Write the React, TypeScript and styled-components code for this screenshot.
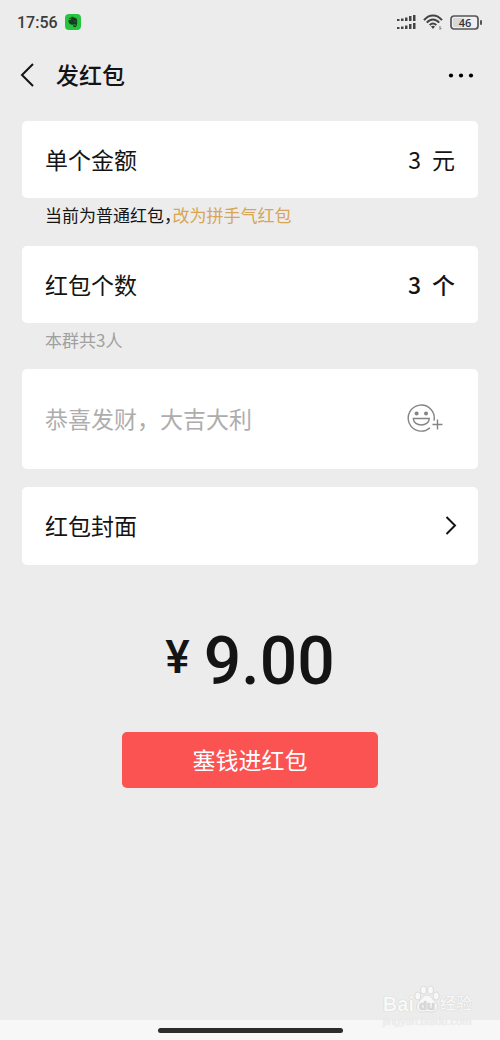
import React, { useState } from "react";
import styled, { createGlobalStyle } from "styled-components";

const GlobalStyle = createGlobalStyle`
  * { box-sizing: border-box; }
  body {
    margin: 0;
    background: #ececec;
    color: #141414;
    font-family: "Noto Sans CJK SC", sans-serif;
  }
  button, input { font: inherit; color: inherit; }
  svg { display: block; flex: none; }
`;

const Screen = styled.div`
  position: relative;
  display: flex;
  flex-direction: column;
  min-height: 100vh;
`;

const StatusBar = styled.div`
  display: flex;
  align-items: center;
  justify-content: space-between;
  height: 44px;
  padding: 0 18px 0 17px;
`;

const StatusGroup = styled.div`
  display: flex;
  align-items: center;
  gap: 7px;
`;

const Clock = styled.time`
  padding-top: 2px;
  font: 500 16px/20px Roboto, sans-serif;
  color: #3c3c3c;
`;

const NavBar = styled.header`
  display: flex;
  align-items: center;
  height: 62px;
  padding: 0 21px 0 14px;
`;

const IconButton = styled.button`
  display: flex;
  align-items: center;
  justify-content: center;
  padding: 5px;
  border: 0;
  background: none;
  cursor: pointer;
`;

const Title = styled.h1`
  flex: 1;
  margin: 0 0 0 14px;
  padding-bottom: 2px;
  font-size: 23px;
  line-height: 32px;
  font-weight: 500;
`;

const Form = styled.form`
  display: flex;
  flex: 1;
  flex-direction: column;
  padding: 15px 22px 0;
`;

const Field = styled.label<{ $tall?: boolean }>`
  display: flex;
  align-items: center;
  height: ${(p) => (p.$tall ? 100 : 77)}px;
  padding: 0 23px 2px;
  border-radius: 5px;
  background: #fff;
  font-size: 23px;
  line-height: 32px;
`;

const CoverButton = styled.button`
  display: flex;
  align-items: center;
  justify-content: space-between;
  height: 78px;
  margin-top: 18px;
  padding: 0 20px 2px 23px;
  border: 0;
  border-radius: 5px;
  background: #fff;
  font-size: 23px;
  line-height: 32px;
  cursor: pointer;
`;

const ValueInput = styled.input<{ $strong?: boolean }>`
  flex: 1;
  min-width: 0;
  padding: 0;
  border: 0;
  outline: 0;
  background: none;
  text-align: right;
  font-weight: ${(p) => (p.$strong ? 500 : 400)};
`;

const Unit = styled.span<{ $strong?: boolean }>`
  margin-left: 11px;
  font-weight: ${(p) => (p.$strong ? 500 : 400)};
`;

const GreetingInput = styled.input`
  flex: 1;
  min-width: 0;
  padding: 0;
  border: 0;
  outline: 0;
  background: none;
  &::placeholder { color: #adadad; opacity: 1; }
`;

const EmojiButton = styled(IconButton)`
  margin-right: 7px;
`;

const Hint = styled.p<{ $muted?: boolean }>`
  margin: 0;
  padding: 5px 23px ${(p) => (p.$muted ? 17 : 19)}px;
  font-size: 17px;
  line-height: 24px;
  color: ${(p) => (p.$muted ? "#a0a0a0" : "#141414")};
  font-feature-settings: "halt";
`;

const SwitchLink = styled.a`
  color: #d6a555;
  text-decoration: none;
`;

const Total = styled.output`
  display: flex;
  justify-content: center;
  align-items: flex-start;
  gap: 14px;
  margin-top: 60px;
  font-family: Roboto, sans-serif;
  font-weight: 500;
`;

const Currency = styled.span`
  font-size: 46px;
  line-height: 64px;
`;

const Amount = styled.span`
  font-size: 66px;
  line-height: 74px;
`;

const SubmitButton = styled.button`
  align-self: center;
  width: 56%;
  min-width: 256px;
  height: 56px;
  margin-top: 33px;
  padding: 0 0 2px;
  border: 0;
  border-radius: 5px;
  background: #fb5352;
  color: #fff;
  font-size: 23px;
  line-height: 32px;
  cursor: pointer;
`;

const HomeBar = styled.footer`
  display: flex;
  align-items: center;
  justify-content: center;
  height: 20px;
  background: #f7f7f7;
`;

const HomeHandle = styled.div`
  width: 37%;
  height: 5px;
  border-radius: 3px;
  background: #2d2d2d;
`;

const Watermark = styled.div`
  position: absolute;
  right: 28px;
  bottom: 13px;
  color: #f8f8f8;
  pointer-events: none;
  text-shadow: 0 0 1px #cccccc, 0 0 1px #d4d4d4;
`;

const WatermarkLogo = styled.div`
  display: flex;
  align-items: flex-end;
  font: 700 20px/22px "Liberation Sans", "Noto Sans CJK SC", sans-serif;
`;

const WatermarkName = styled.span`
  font-size: 16px;
  font-weight: 500;
`;

const WatermarkUrl = styled.div`
  font: 11px/12px "Liberation Sans", sans-serif;
  color: #ededed;
  text-shadow: 0 0 1px #dedede;
`;

const AppBadge = () => (
  <svg width="16" height="16" viewBox="0 0 16 16" aria-hidden="true">
    <rect width="16" height="16" rx="4" fill="#25c53f" />
    <path
      d="M6.200 3.200C7.200 2.600 8.400 2.900 8.900 3.500l2 .4c.9.3 1.400 1.800 1.300 4.200-.1 2.800-.6 4.900-1.800 5.100-1.300.2-2.200-.3-2.200-1.400 0-1 .8-1.500 1.700-1.400v.9c-.6 0-.6.7.1.7.8 0 .7-1 .4-1.500-.5-.7-1.500-.3-2.200.1-.6.4-2.500.2-3.300-.6C3.900 9.200 3.500 7.500 3.500 6.400c0-.5.2-.7.7-.7h1.400c.4 0 .6-.2.6-.6z"
      fill="#173e20"
    />
    <path d="M3.700 5.100 5.600 3.200v1.500c0 .3-.1.4-.4.4z" fill="#173e20" />
    <path d="M9.500 7.300c.2-.7 1.300-.7 1.500.2z" fill="#25c53f" />
  </svg>
);

const SignalIcon = () => (
  <svg width="19" height="16" viewBox="0 0 19 16" fill="#444" aria-hidden="true">
    {[0, 8].map((y) => (
      <g key={y} transform={`translate(0 ${y})`}>
        <rect x="0" y="5" width="2.500" height="2" />
        <rect x="4" y="4.500" width="2.500" height="2.500" />
        <rect x="8" y="3.500" width="2.500" height="3.500" />
        <rect x="12" y="2" width="2.500" height="5" />
        <rect x="16" y="1" width="2.500" height="6" />
      </g>
    ))}
  </svg>
);

const WifiIcon = () => (
  <svg width="20" height="16" viewBox="0 0 20 16" fill="none" stroke="#444" strokeWidth="2" aria-hidden="true">
    <path d="M1 6.200C6-.2 14-.2 19 6.200" />
    <path d="M3.800 8.700c3.600-4.300 8.800-4.300 12.400 0" />
    <path d="M6.700 11.200c2-2.300 4.600-2.300 6.600 0" />
    <path d="M8 12.600 10 15l2-2.400c-1.200-1-2.800-1-4 0Z" fill="#444" stroke="none" />
    <path d="M17 12v3.500l1.500-1.500" strokeWidth="1" stroke="#777" />
  </svg>
);

const BatteryIcon = () => (
  <svg width="32" height="15" viewBox="0 0 32 15" role="img" aria-label="46%">
    <rect x="1" y="1" width="27" height="13" rx="3" fill="#efefef" stroke="#555" strokeWidth="1.700" />
    <rect x="3" y="3" width="11" height="9" rx="1" fill="#d8d8d8" />
    <rect x="30" y="5" width="2" height="5" rx="1" fill="#555" />
    <text x="15" y="11.500" textAnchor="middle" fontFamily="Open Sans" fontWeight="600" fontSize="11" fill="#333">46</text>
  </svg>
);

const BackIcon = () => (
  <svg width="18" height="26" viewBox="0 0 18 26" fill="none" stroke="#141414" strokeWidth="2" aria-hidden="true">
    <path d="M14 2 3 13l11 11" />
  </svg>
);

const MoreIcon = () => (
  <svg width="26" height="6" viewBox="0 0 26 6" fill="#000" aria-hidden="true">
    <circle cx="3" cy="3.500" r="2.100" />
    <circle cx="13" cy="3.500" r="2.100" />
    <circle cx="23" cy="3.500" r="2.100" />
  </svg>
);

const EmojiIcon = () => (
  <svg width="36" height="30" viewBox="0 0 36 30" fill="none" stroke="#848484" strokeWidth="1.400" aria-hidden="true">
    <path d="M27 17.600A13 13 0 1 0 23 24.700" />
    <circle cx="9.600" cy="10.600" r="2" fill="#848484" stroke="none" />
    <circle cx="19" cy="10.600" r="2" fill="#848484" stroke="none" />
    <path d="M6.300 15.500h16c-.4 8.600-15.600 8.600-16 0Z" />
    <path d="M30.500 16.500v10M25.500 21.500h10" />
  </svg>
);

const ChevronIcon = () => (
  <svg width="14" height="20" viewBox="0 0 14 20" fill="none" stroke="#141414" strokeWidth="2" aria-hidden="true">
    <path d="M2.500 2 11 10.500 2.500 19" />
  </svg>
);

const PawIcon = () => (
  <svg width="26" height="30" viewBox="0 0 26 30" fill="#f8f8f8" stroke="#dcdcdc" strokeWidth="1" aria-hidden="true">
    <ellipse cx="3.800" cy="11" rx="3" ry="4" />
    <ellipse cx="9.500" cy="5" rx="3" ry="4" />
    <ellipse cx="16.500" cy="5" rx="3" ry="4" />
    <ellipse cx="22.200" cy="11" rx="3" ry="4" />
    <path d="M13 10c4 0 5 4 8 6.500 4 3.500 3 10-2 10.500-3 .3-4-.5-6-.5s-3 .8-6 .5c-5-.5-6-7-2-10.500C8 14 9 10 13 10Z" />
    <text x="13" y="25" textAnchor="middle" fontFamily="Liberation Sans" fontWeight="700" fontSize="13" fill="#d9d9d9" stroke="none">du</text>
  </svg>
);

export default function App() {
  const [amount, setAmount] = useState("3");
  const [count, setCount] = useState("3");
  const [greeting, setGreeting] = useState("");
  const total = (Number(amount) * Number(count) || 0).toFixed(2);

  return (
    <Screen>
      <GlobalStyle />
      <StatusBar>
        <StatusGroup>
          <Clock>17:56</Clock>
          <AppBadge />
        </StatusGroup>
        <StatusGroup>
          <SignalIcon />
          <WifiIcon />
          <BatteryIcon />
        </StatusGroup>
      </StatusBar>
      <NavBar>
        <IconButton type="button" aria-label="返回"><BackIcon /></IconButton>
        <Title>发红包</Title>
        <IconButton type="button" aria-label="更多"><MoreIcon /></IconButton>
      </NavBar>
      <Form onSubmit={(e) => e.preventDefault()}>
        <Field>
          单个金额
          <ValueInput inputMode="decimal" value={amount} onChange={(e) => setAmount(e.target.value)} />
          <Unit>元</Unit>
        </Field>
        <Hint>当前为普通红包，<SwitchLink href="#lucky">改为拼手气红包</SwitchLink></Hint>
        <Field>
          红包个数
          <ValueInput $strong inputMode="numeric" value={count} onChange={(e) => setCount(e.target.value)} />
          <Unit $strong>个</Unit>
        </Field>
        <Hint $muted>本群共3人</Hint>
        <Field $tall>
          <GreetingInput
            aria-label="祝福语"
            placeholder="恭喜发财，大吉大利"
            value={greeting}
            onChange={(e) => setGreeting(e.target.value)}
          />
          <EmojiButton type="button" aria-label="添加表情"><EmojiIcon /></EmojiButton>
        </Field>
        <CoverButton type="button">
          红包封面
          <ChevronIcon />
        </CoverButton>
        <Total>
          <Currency>¥</Currency>
          <Amount>{total}</Amount>
        </Total>
        <SubmitButton type="submit">塞钱进红包</SubmitButton>
      </Form>
      <HomeBar><HomeHandle /></HomeBar>
      <Watermark>
        <WatermarkLogo>
          Bai<PawIcon /><WatermarkName>经验</WatermarkName>
        </WatermarkLogo>
        <WatermarkUrl>jingyan.baidu.com</WatermarkUrl>
      </Watermark>
    </Screen>
  );
}
